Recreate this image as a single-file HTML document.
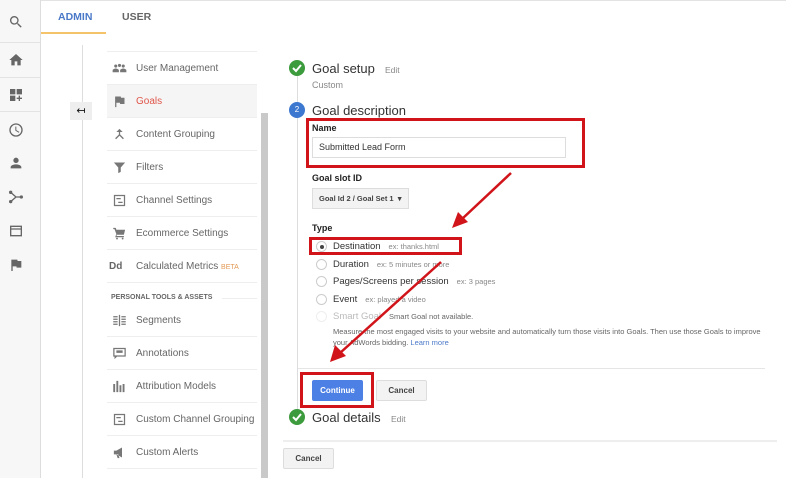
<!DOCTYPE html>
<html><head><meta charset="utf-8"><style>
*{margin:0;padding:0;box-sizing:border-box}
body{width:786px;height:478px;overflow:hidden;background:#fff;font-family:"Liberation Sans",Arial,sans-serif;position:relative;color:#333}
.a{position:absolute}
.rail{left:0;top:0;width:41px;height:478px;background:#f7f7f7;border-right:1px solid #ddd}
.ic{position:absolute;left:8px;width:16px;height:16px;fill:#666}
.mi{position:absolute;left:107px;width:150px;height:33px;border-bottom:1px solid #eee;font-size:10px;color:#666;line-height:33px;padding-left:29px}
.mi svg{position:absolute;left:5px;top:9px;width:15px;height:15px;fill:#777}
.radio{position:absolute;left:316px;width:11px;height:11px;border:1px solid #ccc;border-radius:50%;background:#fff}
.rl{position:absolute;left:333px;font-size:9.5px;color:#333}
.rl span{font-size:7.5px;color:#888;margin-left:8px}
.btn{position:absolute;height:21px;border:1px solid #ddd;background:#f3f3f3;font-size:8px;font-weight:bold;color:#444;text-align:center;line-height:19px;border-radius:2px}
.red{position:absolute;border:3px solid #d0141a}
.chk{position:absolute;width:16px;height:16px;border-radius:50%;background:#3c9b3c}
</style></head><body>
<div class="a" style="left:0;top:0;width:786px;height:1px;background:#e3e3e3"></div>
<div class="a rail">
<svg class="ic" style="top:14px" viewBox="0 0 24 24"><path d="M15.5 14h-.8l-.3-.3A6.5 6.5 0 1 0 9.5 16a6.5 6.5 0 0 0 4.2-1.6l.3.3v.8l5 5 1.5-1.5-5-5zm-6 0A4.5 4.5 0 1 1 14 9.5 4.5 4.5 0 0 1 9.5 14z"/></svg>
<div class="a" style="left:0;top:42px;width:40px;height:1px;background:#e3e3e3"></div>
<svg class="ic" style="top:52px" viewBox="0 0 24 24"><path d="M10 20v-6h4v6h5v-8h3L12 3 2 12h3v8z"/></svg>
<div class="a" style="left:0;top:77px;width:40px;height:1px;background:#e3e3e3"></div>
<svg class="ic" style="top:87px" viewBox="0 0 24 24"><path d="M3 3h8v8H3zM13 3h8v8h-8zM3 13h8v8H3zM16 13h2v3h3v2h-3v3h-2v-3h-3v-2h3z"/></svg>
<div class="a" style="left:0;top:111px;width:40px;height:1px;background:#e3e3e3"></div>
<svg class="ic" style="top:122px" viewBox="0 0 24 24"><path d="M12 2a10 10 0 1 0 0 20 10 10 0 0 0 0-20zm0 18a8 8 0 1 1 0-16 8 8 0 0 1 0 16zm.5-13H11v6l5.2 3.2.8-1.3-4.5-2.7z"/></svg>
<svg class="ic" style="top:155px" viewBox="0 0 24 24"><path d="M12 12a4 4 0 1 0 0-8 4 4 0 0 0 0 8zm0 2c-2.7 0-8 1.3-8 4v2h16v-2c0-2.7-5.3-4-8-4z"/></svg>
<svg class="ic" style="top:189px" viewBox="0 0 24 24"><circle cx="4" cy="5" r="2.5"/><circle cx="4" cy="19" r="2.5"/><circle cx="20" cy="12" r="2.5"/><path d="M4 5l8 7h8M4 19l8-7" stroke="#666" stroke-width="2" fill="none"/></svg>
<svg class="ic" style="top:223px" viewBox="0 0 24 24"><path d="M3 4h18v16H3zm2 6v8h14v-8zm0-4v2h14V6z"/></svg>
<svg class="ic" style="top:257px" viewBox="0 0 24 24"><path d="M14.4 6L14 4H5v17h2v-7h5.6l.4 2h7V6z"/></svg>
</div>
<div class="a" style="left:58px;top:11px;font-size:10.5px;color:#4a79c8;font-weight:bold">ADMIN</div>
<div class="a" style="left:122px;top:11px;font-size:10.5px;color:#666;font-weight:bold">USER</div>
<div class="a" style="left:41px;top:32px;width:65px;height:2px;background:#f4c36a"></div>
<div class="a" style="left:82px;top:45px;width:1px;height:433px;background:#ddd"></div>
<div class="a" style="left:70px;top:102px;width:22px;height:18px;background:#eee;font-size:11px;text-align:center;line-height:18px;color:#111">↤</div>
<div class="a" style="left:107px;top:51px;width:150px;height:1px;background:#eee"></div>
<div class="mi" style="top:52px"><svg viewBox="0 0 24 24"><path d="M1 18v-3c0-2 4-3 5-3s5 1 5 3v3zM13 18v-3c0-2 4-3 5-3s5 1 5 3v3z"/><circle cx="6" cy="8" r="2.5"/><circle cx="12" cy="7" r="2.5"/><circle cx="18" cy="8" r="2.5"/></svg>User Management</div>
<div class="mi" style="top:85px;background:#f5f5f5;color:#e0564a"><svg viewBox="0 0 24 24"><path d="M14.4 6L14 4H5v17h2v-7h5.6l.4 2h7V6z"/></svg>Goals</div>
<div class="mi" style="top:118px"><svg viewBox="0 0 24 24"><path d="M12 3l-5 5h4v4l-6 6 1.5 1.5L12 14l5.5 5.5L19 18l-6-6V8h4z"/></svg>Content Grouping</div>
<div class="mi" style="top:151px"><svg viewBox="0 0 24 24"><path d="M3 4h18l-7 8v7l-4 2v-9z"/></svg>Filters</div>
<div class="mi" style="top:184px"><svg viewBox="0 0 24 24"><path d="M3 3h18v18H3zm2 2v14h14V5zm2 3h7v2H7zm3 6h7v2h-7z"/></svg>Channel Settings</div>
<div class="mi" style="top:217px"><svg viewBox="0 0 24 24"><path d="M2 3h4l1 3h14l-2 8H8l-1 2h12v2H5l2-5-3-8H2z"/><circle cx="8" cy="20" r="1.5"/><circle cx="17" cy="20" r="1.5"/></svg>Ecommerce Settings</div>
<div class="mi" style="top:250px"><b style="position:absolute;left:2px;top:0;font-size:10px;color:#666">Dd</b>Calculated Metrics <span style="font-size:7px;color:#e39a56">BETA</span></div>
<div class="a" style="left:111px;top:294px;font-size:7px;color:#666;font-weight:bold">PERSONAL TOOLS &amp; ASSETS</div>
<div class="a" style="left:222px;top:298px;width:35px;height:1px;background:#eee"></div>
<div class="mi" style="top:304px"><svg viewBox="0 0 24 24"><path d="M2 5h7v2H2zm0 4h7v2H2zm0 4h7v2H2zm0 4h7v2H2zM11 3h2v18h-2zM15 5h7v2h-7zm0 4h7v2h-7zm0 4h7v2h-7zm0 4h7v2h-7z"/></svg>Segments</div>
<div class="mi" style="top:337px"><svg viewBox="0 0 24 24"><path d="M2 3h20v14H8l-4 4v-4H2zm2 2v10h16V5zm3 2h10v4H7z"/></svg>Annotations</div>
<div class="mi" style="top:370px"><svg viewBox="0 0 24 24"><path d="M2 8h3v13H2zm5-5h3v18H7zm5 7h3v11h-3zm5-2h3v13h-3z"/></svg>Attribution Models</div>
<div class="mi" style="top:403px;white-space:nowrap;overflow:hidden"><svg viewBox="0 0 24 24"><path d="M3 3h18v18H3zm2 2v14h14V5zm2 3h7v2H7zm3 6h7v2h-7z"/></svg>Custom Channel Grouping <span style="font-size:7px;color:#e39a56">BETA</span></div>
<div class="mi" style="top:436px"><svg viewBox="0 0 24 24"><path d="M3 9h4l9-5v16l-9-5H3zm4 6l2 6h3l-2-6z"/></svg>Custom Alerts</div>
<div class="a" style="left:261px;top:113px;width:7px;height:365px;background:#c9c9c9"></div>

<div class="a" style="left:297px;top:76px;width:1px;height:335px;background:#ddd"></div>
<div class="chk" style="left:289px;top:60px"><svg viewBox="0 0 16 16" width="16" height="16"><path d="M4 8l3 3 5-6" stroke="#fff" stroke-width="2" fill="none"/></svg></div>
<div class="a" style="left:312px;top:61px;font-size:13px;color:#333">Goal setup</div>
<div class="a" style="left:385px;top:65px;font-size:8.5px;color:#888">Edit</div>
<div class="a" style="left:312px;top:80px;font-size:9px;color:#888">Custom</div>
<div class="a" style="left:289px;top:102px;width:16px;height:16px;border-radius:50%;background:#3c78d0;color:#fff;font-size:8px;text-align:center;line-height:16px">2</div>
<div class="a" style="left:312px;top:103px;font-size:13px;color:#333">Goal description</div>
<div class="a" style="left:312px;top:123px;font-size:9px;font-weight:bold;color:#222">Name</div>
<div class="a" style="left:312px;top:137px;width:254px;height:21px;border:1px solid #ddd;font-size:9px;padding-left:6px;line-height:19px;color:#333">Submitted Lead Form</div>
<div class="red" style="left:306px;top:118px;width:279px;height:50px"></div>
<div class="a" style="left:312px;top:173px;font-size:9px;font-weight:bold;color:#222">Goal slot ID</div>
<div class="a" style="left:312px;top:188px;width:97px;height:21px;border:1px solid #ddd;background:#f3f3f3;font-size:7.5px;font-weight:bold;padding-left:6px;line-height:19px;color:#444">Goal Id 2 / Goal Set 1 &nbsp;▾</div>
<div class="a" style="left:312px;top:223px;font-size:9px;font-weight:bold;color:#222">Type</div>
<div class="radio" style="top:241px"><div style="position:absolute;left:3px;top:3px;width:4px;height:4px;border-radius:50%;background:#444"></div></div>
<div class="rl" style="top:241px">Destination<span>ex: thanks.html</span></div>
<div class="radio" style="top:259px"></div><div class="rl" style="top:259px">Duration<span>ex: 5 minutes or more</span></div>
<div class="radio" style="top:276px"></div><div class="rl" style="top:276px">Pages/Screens per session<span>ex: 3 pages</span></div>
<div class="radio" style="top:294px"></div><div class="rl" style="top:294px">Event<span>ex: played a video</span></div>
<div class="radio" style="top:311px;border-color:#eee"></div><div class="rl" style="top:311px;color:#bbb">Smart Goal<span style="color:#666">Smart Goal not available.</span></div>
<div class="a" style="left:333px;top:326px;font-size:7.5px;color:#666;line-height:11px;width:440px">Measure the most engaged visits to your website and automatically turn those visits into Goals. Then use those Goals to improve your AdWords bidding. <span style="color:#4a79c8">Learn more</span></div>
<div class="red" style="left:309px;top:237px;width:153px;height:18px"></div>
<div class="a" style="left:298px;top:368px;width:467px;height:1px;background:#e5e5e5"></div>
<div class="btn" style="left:312px;top:380px;width:51px;background:#4d80e4;border-color:#4d80e4;color:#fff">Continue</div>
<div class="btn" style="left:376px;top:380px;width:51px">Cancel</div>
<div class="red" style="left:300px;top:372px;width:74px;height:36px"></div>
<div class="chk" style="left:289px;top:409px"><svg viewBox="0 0 16 16" width="16" height="16"><path d="M4 8l3 3 5-6" stroke="#fff" stroke-width="2" fill="none"/></svg></div>
<div class="a" style="left:312px;top:410px;font-size:13px;color:#333">Goal details</div>
<div class="a" style="left:391px;top:414px;font-size:8.5px;color:#888">Edit</div>
<div class="a" style="left:283px;top:440px;width:494px;height:2px;background:#eee"></div>
<div class="btn" style="left:283px;top:448px;width:51px">Cancel</div>
<svg class="a" style="left:0;top:0" width="786" height="478"><g stroke="#d0141a" stroke-width="2.5" fill="#d0141a">
<line x1="511" y1="173" x2="462" y2="219"/><polygon points="452,228 458,212 468,222" stroke="none"/>
<line x1="441" y1="262" x2="340" y2="353"/><polygon points="330,362 335,345 346,356" stroke="none"/></g></svg>
</body></html>
